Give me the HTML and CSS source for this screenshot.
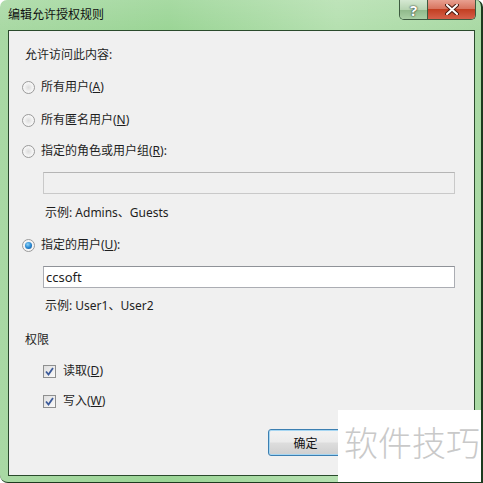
FILE: index.html
```html
<!DOCTYPE html>
<html lang="zh-CN">
<head>
    <meta charset="UTF-8">
    <title>编辑允许授权规则</title>
    <link rel="stylesheet" href="styles.css">
</head>
<body>
    <div class="window">
        <div class="titlebar">
            <span class="title">编辑允许授权规则</span>
            <div class="caption-buttons">
                <span class="cap-btn help">?</span>
                <span class="cap-btn close">
                    <svg width="14" height="11" viewBox="0 0 14 11">
                        <path d="M2 1 L12 10 M12 1 L2 10" stroke="#4a1a10" stroke-width="4" stroke-linecap="round"/>
                        <path d="M2 1 L12 10 M12 1 L2 10" stroke="#fff" stroke-width="2" stroke-linecap="round"/>
                    </svg>
                </span>
            </div>
        </div>

        <div class="client">
            <div class="line heading">允许访问此内容:</div>

            <label class="radio-row r1">
                <span class="radio"></span>所有用户(<u>A</u>)
            </label>
            <label class="radio-row r2">
                <span class="radio"></span>所有匿名用户(<u>N</u>)
            </label>
            <label class="radio-row r3">
                <span class="radio"></span>指定的角色或用户组(<u>R</u>):
            </label>
            <div class="textbox disabled"></div>
            <div class="line example">示例: Admins、Guests</div>

            <label class="radio-row r4">
                <span class="radio checked"></span>指定的用户(<u>U</u>):
            </label>
            <div class="textbox">ccsoft</div>
            <div class="line example ex2">示例: User1、User2</div>

            <div class="line heading perm">权限</div>
            <label class="check-row c1">
                <span class="checkbox">
                    <svg width="9" height="9" viewBox="0 0 9 9"><path d="M1 4.5 L3.5 7.5 L8 1" fill="none" stroke="#3b5a9a" stroke-width="1.8"/></svg>
                </span>读取(<u>D</u>)
            </label>
            <label class="check-row c2">
                <span class="checkbox">
                    <svg width="9" height="9" viewBox="0 0 9 9"><path d="M1 4.5 L3.5 7.5 L8 1" fill="none" stroke="#3b5a9a" stroke-width="1.8"/></svg>
                </span>写入(<u>W</u>)
            </label>

            <div class="buttons">
                <button class="btn default">确定</button>
            </div>
        </div>

        <div class="watermark">软件技巧</div>
    </div>
</body>
</html>
```

FILE: styles.css
```css
body {
    margin: 0;
    padding: 0;
    background: #fff;
    font-family: "Noto Sans", "Noto Sans CJK SC", sans-serif;
    font-size: 12px;
    color: #1e1e1e;
}

.window {
    position: relative;
    width: 483px;
    height: 483px;
    box-sizing: border-box;
    display: flex;
    flex-direction: column;
    background: linear-gradient(to right, #a9d9a4 0%, #9bd596 35%, #b5e0b0 70%, #a9d9a4 100%);
    border-radius: 7px 7px 0 8px;
    border-right: 2px solid #1d3a1f;
    border-bottom: 1px solid #1d3a1f;
    overflow: hidden;
}

.titlebar {
    height: 30px;
    flex: none;
    display: flex;
    align-items: flex-start;
    justify-content: space-between;
    background: linear-gradient(to bottom, rgba(255,255,255,0.12), rgba(255,255,255,0));
}

.title {
    margin: 6px 0 0 8px;
    line-height: 18px;
    color: #111;
}

.caption-buttons {
    display: flex;
    margin-right: 5px;
    border: 1px solid #3d5a40;
    border-top: none;
    border-radius: 0 0 5px 5px;
    overflow: hidden;
    height: 19px;
}

.cap-btn {
    display: flex;
    align-items: center;
    justify-content: center;
    height: 19px;
}

.help {
    width: 27px;
    border-right: 1px solid #3d5a40;
    background: linear-gradient(to bottom, #d5e8d2 0%, #b7d4b2 50%, #8fb88a 51%, #a9cfa4 100%);
    color: #fff;
    font-weight: bold;
    font-size: 15px;
    text-shadow: 0 0 2px #2a3a2a, 0 0 1px #2a3a2a;
}

.close {
    width: 47px;
    background: linear-gradient(to bottom, #e8a090 0%, #d87560 45%, #c23f22 50%, #d5604a 100%);
}

.client {
    flex: 1;
    margin: 0 6px 6px 8px;
    background: #f0f0f0;
    border: 1px solid #2a4a2c;
    padding: 16px 0 0 16px;
    box-sizing: border-box;
}

.line {
    line-height: 16px;
    height: 16px;
}

.radio-row, .check-row {
    display: flex;
    align-items: center;
    height: 16px;
    line-height: 16px;
}

.radio-row {
    margin-left: -3px;
}

.r1 { margin-top: 16px; }
.r2 { margin-top: 17px; }
.r3 { margin-top: 15px; }
.r4 { margin-top: 16px; }

.radio {
    width: 11px;
    height: 11px;
    border: 1px solid #9a9a9a;
    border-radius: 50%;
    background: radial-gradient(circle at 50% 50%, #dcdcdc 0%, #f4f4f4 55%, #fbfbfb 100%);
    margin-right: 6px;
    position: relative;
    flex: none;
}

.radio.checked::after {
    content: "";
    position: absolute;
    left: 2px;
    top: 2px;
    width: 7px;
    height: 7px;
    border-radius: 50%;
    background: radial-gradient(circle at 40% 35%, #8fd3f5 0%, #2a8ad4 50%, #144f8a 100%);
}

.textbox {
    width: 412px;
    height: 22px;
    box-sizing: border-box;
    margin: 13px 0 0 18px;
    border: 1px solid #abadb3;
    border-top-color: #8f9298;
    background: #fff;
    padding-left: 2px;
    line-height: 20px;
    font-size: 13px;
}

.textbox.disabled {
    background: #f0f0f0;
    border-color: #c9c9c9;
    border-top-color: #b5b5b5;
}

.example {
    margin: 11px 0 0 20px;
}

.ex2 { margin-top: 10px; }

.perm { margin-top: 18px; }

.check-row {
    margin-left: 18px;
}

.c1 { margin-top: 15px; }
.c2 { margin-top: 14px; }

.checkbox {
    width: 11px;
    height: 11px;
    border: 1px solid #8e8f8f;
    background: linear-gradient(to bottom right, #dedede, #fafafa);
    margin-right: 7px;
    display: flex;
    align-items: center;
    justify-content: center;
    flex: none;
}

.buttons {
    display: flex;
    margin: 20px 0 0 243px;
}

.btn {
    width: 75px;
    height: 27px;
    padding: 0;
    border: 1px solid #707070;
    border-radius: 3px;
    background: linear-gradient(to bottom, #f2f2f2 0%, #ebebeb 48%, #dddddd 52%, #cfcfcf 100%);
    font-family: "Noto Sans CJK SC", sans-serif;
    font-size: 12px;
    color: #111;
}

.btn.default {
    border-color: #3c7fb1;
    box-shadow: inset 0 0 0 1px #a6d6f2;
}

.watermark {
    position: absolute;
    left: 338px;
    top: 410px;
    width: 145px;
    height: 73px;
    background: #fff;
    color: #c9c9c9;
    font-family: "Noto Sans CJK SC", sans-serif;
    font-weight: 300;
    font-size: 34px;
    line-height: 64px;
    padding-left: 6px;
    box-sizing: border-box;
}
```
